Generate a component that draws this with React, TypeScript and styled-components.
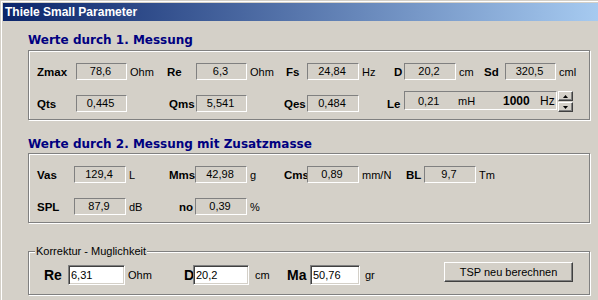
import React, { FC } from "react";
import styled, { createGlobalStyle } from "styled-components";

const GlobalStyle = createGlobalStyle`
  html, body {
    margin: 0;
    padding: 0;
    background: #d4d0c8;
  }
  body {
    font-family: "Liberation Sans", Arial, sans-serif;
    font-size: 11px;
    color: #000;
  }
`;

const App: FC = () => {
  return (
    <>
      <GlobalStyle />
      <Window>
        <TitleBar>Thiele Small Parameter</TitleBar>
        <Body>
          <Heading>Werte durch 1. Messung</Heading>
          <Group>
            <Row>
              <Label $w={39}>Zmax</Label>
              <Field $w={51}>78,6</Field>
              <Unit $w={40}>Ohm</Unit>
              <Label $w={29}>Re</Label>
              <Field $w={51}>6,3</Field>
              <Unit $w={39}>Ohm</Unit>
              <Label $w={21}>Fs</Label>
              <Field $w={52}>24,84</Field>
              <Unit $w={35}>Hz</Unit>
              <Label $w={10}>D</Label>
              <Field $w={52}>20,2</Field>
              <Unit $w={28}>cm</Unit>
              <Label $w={21}>Sd</Label>
              <Field $w={51}>320,5</Field>
              <Unit>cml</Unit>
            </Row>
            <Row>
              <Label $w={39}>Qts</Label>
              <Field $w={51}>0,445</Field>
              <Unit $w={42} />
              <Label $w={27}>Qms</Label>
              <Field $w={51}>5,541</Field>
              <Unit $w={37} />
              <Label $w={23}>Qes</Label>
              <Field $w={52}>0,484</Field>
              <Unit $w={28} />
              <Label $w={17}>Le</Label>
              <LeBox>
                <LePart $w={40}>0,21</LePart>
                <LePart $w={45}>mH</LePart>
                <LePart $w={37} $bold>
                  1000
                </LePart>
                <LePart $big>Hz</LePart>
              </LeBox>
              <Spinner>
                <SpinButton>
                  <svg width="7" height="4" viewBox="0 0 7 4">
                    <path d="M3.5 0 L7 4 L0 4 Z" fill="#000" />
                  </svg>
                </SpinButton>
                <SpinButton>
                  <svg width="7" height="4" viewBox="0 0 7 4">
                    <path d="M0 0 L7 0 L3.5 4 Z" fill="#000" />
                  </svg>
                </SpinButton>
              </Spinner>
            </Row>
          </Group>

          <Heading $top={17}>Werte durch 2. Messung mit Zusatzmasse</Heading>
          <Group>
            <Row>
              <Label $w={37}>Vas</Label>
              <Field $w={52}>129,4</Field>
              <Unit $w={43}>L</Unit>
              <Label $w={26}>Mms</Label>
              <Field $w={52}>42,98</Field>
              <Unit $w={37}>g</Unit>
              <Label $w={23}>Cms</Label>
              <Field $w={52}>0,89</Field>
              <Unit $w={47}>mm/N</Unit>
              <Label $w={18}>BL</Label>
              <Field $w={52}>9,7</Field>
              <Unit>Tm</Unit>
            </Row>
            <Row>
              <Label $w={37}>SPL</Label>
              <Field $w={52}>87,9</Field>
              <Unit $w={53}>dB</Unit>
              <Label $w={16}>no</Label>
              <Field $w={52}>0,39</Field>
              <Unit>%</Unit>
            </Row>
          </Group>

          <FrameBox>
            <Legend>Korrektur - Muglichkeit</Legend>
            <InputRow>
              <BigLabel $w={24}>Re</BigLabel>
              <TextInput $w={57} defaultValue="6,31" />
              <Unit $w={59}>Ohm</Unit>
              <BigLabel $w={9}>D</BigLabel>
              <TextInput $w={56} defaultValue="20,2" />
              <Unit $w={38} $pad={6}>
                cm
              </Unit>
              <BigLabel $w={23}>Ma</BigLabel>
              <TextInput $w={50} defaultValue="50,76" />
              <Unit $w={84} $pad={5}>
                gr
              </Unit>
              <PushButton>TSP neu berechnen</PushButton>
            </InputRow>
          </FrameBox>
        </Body>
      </Window>
    </>
  );
};

export default App;

const Window = styled.div`
  width: 598px;
  height: 300px;
  box-sizing: border-box;
  padding: 3px 0 0 3px;
  overflow: hidden;
  background: #d4d0c8;
  box-shadow: inset 1px 1px 0 #d4d0c8, inset 2px 2px 0 #ffffff;
`;

const TitleBar = styled.div`
  height: 18px;
  line-height: 18px;
  padding-left: 2px;
  background: linear-gradient(to right, #0a246a, #a6caf0);
  color: #fff;
  font-family: "Liberation Sans", Arial, sans-serif;
  font-weight: bold;
  font-size: 12px;
  white-space: nowrap;
`;

const Body = styled.div`
  padding: 12px 0 0 25px;
`;

const Heading = styled.h2<{ $top?: number }>`
  margin: ${({ $top }) => $top ?? 0}px 0 ${({ $top }) => ($top ? 1 : 2)}px;
  height: 15px;
  line-height: 15px;
  font-family: "DejaVu Sans", Verdana, sans-serif;
  font-weight: bold;
  font-size: 12px;
  color: #000080;
  white-space: nowrap;
`;

const Group = styled.div`
  width: 562px;
  box-sizing: border-box;
  border: 1px solid #808080;
  box-shadow: inset 1px 1px 0 #fff, 1px 1px 0 #fff;
  padding: 12px 0 7px 8px;
  display: flex;
  flex-direction: column;
  gap: 15px;
`;

const Row = styled.div`
  display: flex;
  align-items: center;
  height: 17px;
`;

const Label = styled.span<{ $w?: number }>`
  flex: none;
  width: ${({ $w }) => ($w ? `${$w}px` : "auto")};
  font-family: "Liberation Sans", Arial, sans-serif;
  font-weight: bold;
  font-size: 11.5px;
  white-space: nowrap;
`;

const Field = styled.div<{ $w: number }>`
  flex: none;
  position: relative;
  width: ${({ $w }) => $w}px;
  height: 17px;
  box-sizing: border-box;
  border: 1px solid;
  border-color: #808080 #fff #fff #808080;
  background: #d4d0c8;
  padding-right: 2px;
  text-align: center;
  line-height: 15px;
  font-size: 11px;
`;

const Unit = styled.span<{ $w?: number; $pad?: number }>`
  flex: none;
  width: ${({ $w }) => ($w ? `${$w}px` : "auto")};
  box-sizing: border-box;
  padding-left: ${({ $pad }) => $pad ?? 3}px;
  font-size: 11px;
  white-space: nowrap;
`;

const LeBox = styled.div`
  flex: none;
  display: flex;
  align-items: center;
  align-self: flex-start;
  margin-top: -4px;
  width: 153px;
  height: 19px;
  box-sizing: border-box;
  border: 1px solid;
  border-color: #808080 #fff #fff #808080;
  padding-left: 13px;
  font-size: 11px;
`;

const LePart = styled.span<{ $w?: number; $bold?: boolean; $big?: boolean }>`
  flex: none;
  width: ${({ $w }) => ($w ? `${$w}px` : "auto")};
  font-weight: ${({ $bold }) => ($bold ? "bold" : "normal")};
  font-size: ${({ $bold, $big }) => ($bold ? 12 : $big ? 12 : 11)}px;
`;

const Spinner = styled.div`
  flex: none;
  align-self: flex-start;
  margin: -4px 0 0 1px;
  width: 15px;
  display: flex;
  flex-direction: column;
  gap: 1px;
`;

const SpinButton = styled.div`
  height: 10px;
  box-sizing: border-box;
  border: 1px solid;
  border-color: #fff #404040 #404040 #fff;
  box-shadow: inset -1px -1px 0 #808080;
  background: #d4d0c8;
  display: flex;
  align-items: center;
  justify-content: center;

  svg {
    display: block;
    width: 5px;
    height: 3px;
  }
`;

const FrameBox = styled.div`
  position: relative;
  margin-top: 28px;
  width: 562px;
  box-sizing: border-box;
  border: 1px solid #808080;
  box-shadow: inset 1px 1px 0 #fff, 1px 1px 0 #fff;
  padding: 13px 0 9px 15px;
`;

const Legend = styled.span`
  position: absolute;
  left: 6px;
  top: -8px;
  padding: 0 1px;
  background: #d4d0c8;
  font-size: 11px;
  line-height: 14px;
  white-space: nowrap;
`;

const InputRow = styled.div`
  display: flex;
  align-items: center;
  height: 20px;
`;

const BigLabel = styled.span<{ $w: number }>`
  flex: none;
  width: ${({ $w }) => $w}px;
  font-family: "Liberation Sans", Arial, sans-serif;
  font-weight: bold;
  font-size: 14px;
  white-space: nowrap;
`;

const TextInput = styled.input<{ $w: number }>`
  flex: none;
  position: relative;
  width: ${({ $w }) => $w}px;
  height: 20px;
  box-sizing: border-box;
  margin: 0;
  padding: 0 2px;
  border: 1px solid;
  border-color: #808080 #fff #fff #808080;
  box-shadow: inset 1px 1px 0 #404040, inset -1px -1px 0 #d4d0c8;
  background: #fff;
  font-family: "Liberation Sans", Arial, sans-serif;
  font-size: 11px;
  line-height: 14px;
  color: #000;
  outline: none;
`;

const PushButton = styled.button`
  flex: none;
  align-self: flex-start;
  margin: -3px 0 0;
  width: 129px;
  height: 20px;
  box-sizing: border-box;
  padding: 0;
  border: 1px solid;
  border-color: #fff #404040 #404040 #fff;
  box-shadow: inset -1px -1px 0 #808080;
  background: #d4d0c8;
  font-family: "Liberation Sans", Arial, sans-serif;
  font-size: 11px;
  color: #000;
`;
